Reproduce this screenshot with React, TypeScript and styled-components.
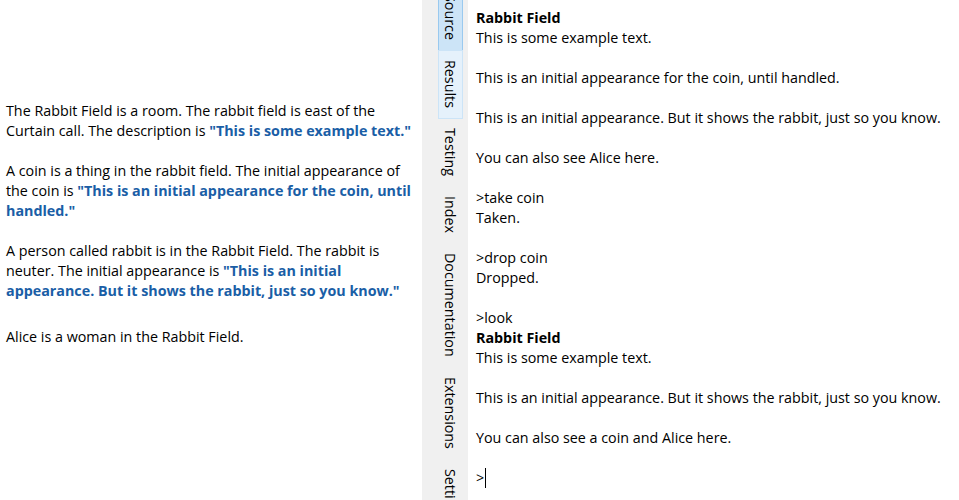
import React, { FC } from 'react';
import styled, { createGlobalStyle } from 'styled-components';

const GlobalStyle = createGlobalStyle`
  html, body {
    margin: 0;
    padding: 0;
    background: #ffffff;
  }
  body {
    font-family: "Open Sans", "Noto Sans", sans-serif;
    font-size: 14.3px;
    color: #000000;
  }
`;

const Shell = styled.div`
  display: flex;
  width: 959px;
  height: 500px;
  overflow: hidden;
`;

const SourcePane = styled.div`
  width: 422px;
  flex-shrink: 0;
  padding: 101px 0 0 6px;
  box-sizing: border-box;
`;

const Para = styled.p<{ $gap?: number }>`
  margin: 0 0 ${(p) => p.$gap ?? 20}px 0;
  line-height: 20px;
  white-space: nowrap;
`;

const Quoted = styled.strong`
  color: #1a5ea6;
  font-weight: 700;
`;

const TabStrip = styled.div`
  width: 46px;
  flex-shrink: 0;
  background: #f0f0f0;
  padding: 0 5px 0 16px;
  box-sizing: border-box;
  overflow: hidden;
`;

const TabList = styled.div`
  display: flex;
  flex-direction: column;
  margin-top: -16px;
`;

const Tab = styled.div<{ $state?: 'selected' | 'hot' }>`
  writing-mode: vertical-rl;
  width: 25px;
  box-sizing: border-box;
  padding: 9px 0 10px;
  display: flex;
  align-items: center;
  line-height: 25px;
  white-space: nowrap;
  color: #000;
  border: 1px solid
    ${(p) => (p.$state === 'selected' ? '#99c9ef' : p.$state === 'hot' ? '#cce4f7' : 'transparent')};
  background: ${(p) => (p.$state === 'selected' ? '#cce4f7' : p.$state === 'hot' ? '#e5f1fb' : 'transparent')};
  & + & {
    margin-top: -1px;
  }
`;

const Transcript = styled.div`
  flex: 1;
  padding: 8px 0 0 8px;
  box-sizing: border-box;
`;

const Line = styled.div<{ $bold?: boolean }>`
  height: 20px;
  line-height: 20px;
  white-space: nowrap;
  font-weight: ${(p) => (p.$bold ? 700 : 400)};
`;

const Caret = styled.span`
  display: inline-block;
  width: 1px;
  height: 20px;
  background: #000;
  vertical-align: top;
  margin-left: 1px;
`;

type Row = { text: string; bold?: boolean };

const transcript: Row[] = [
  { text: 'Rabbit Field', bold: true },
  { text: 'This is some example text.' },
  { text: '' },
  { text: 'This is an initial appearance for the coin, until handled.' },
  { text: '' },
  { text: 'This is an initial appearance. But it shows the rabbit, just so you know.' },
  { text: '' },
  { text: 'You can also see Alice here.' },
  { text: '' },
  { text: '>take coin' },
  { text: 'Taken.' },
  { text: '' },
  { text: '>drop coin' },
  { text: 'Dropped.' },
  { text: '' },
  { text: '>look' },
  { text: 'Rabbit Field', bold: true },
  { text: 'This is some example text.' },
  { text: '' },
  { text: 'This is an initial appearance. But it shows the rabbit, just so you know.' },
  { text: '' },
  { text: 'You can also see a coin and Alice here.' },
  { text: '' },
];

const tabs = ['Source', 'Results', 'Testing', 'Index', 'Documentation', 'Extensions', 'Settings'];

const App: FC = () => (
  <>
    <GlobalStyle />
    <Shell>
      <SourcePane>
        <Para>
          The Rabbit Field is a room. The rabbit field is east of the
          <br />
          Curtain call. The description is <Quoted>"This is some example text."</Quoted>
        </Para>
        <Para>
          A coin is a thing in the rabbit field. The initial appearance of
          <br />
          the coin is <Quoted>"This is an initial appearance for the coin, until</Quoted>
          <br />
          <Quoted>handled."</Quoted>
        </Para>
        <Para $gap={26}>
          A person called rabbit is in the Rabbit Field. The rabbit is
          <br />
          neuter. The initial appearance is <Quoted>"This is an initial</Quoted>
          <br />
          <Quoted>appearance. But it shows the rabbit, just so you know."</Quoted>
        </Para>
        <Para>Alice is a woman in the Rabbit Field.</Para>
      </SourcePane>
      <TabStrip>
        <TabList>
          {tabs.map((t, i) => (
            <Tab key={t} $state={i === 0 ? 'selected' : i === 1 ? 'hot' : undefined}>
              {t}
            </Tab>
          ))}
        </TabList>
      </TabStrip>
      <Transcript>
        {transcript.map((r, i) => (
          <Line key={i} $bold={r.bold}>
            {r.text || '\u00a0'}
          </Line>
        ))}
        <Line>
          &gt;
          <Caret />
        </Line>
      </Transcript>
    </Shell>
  </>
);

export default App;
